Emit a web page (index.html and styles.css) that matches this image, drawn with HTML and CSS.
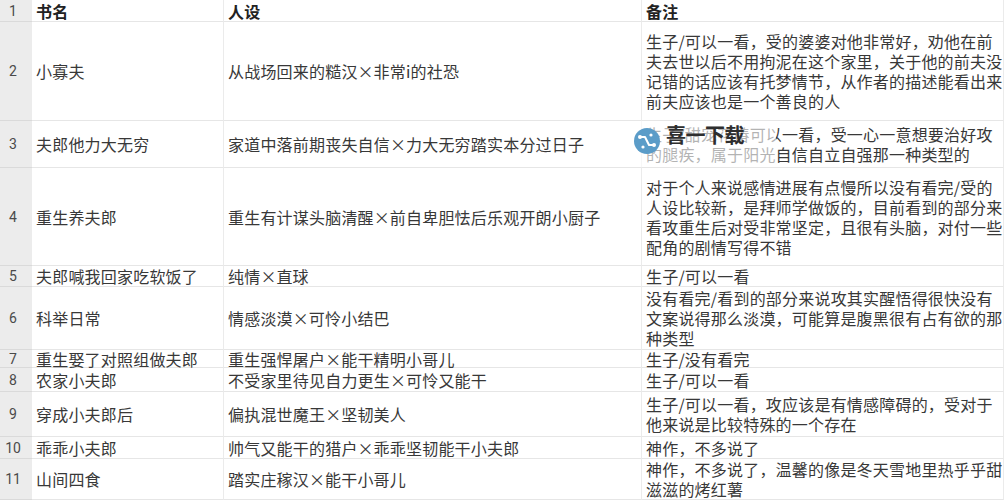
FILE: index.html
```html
<!DOCTYPE html>
<html lang="zh-CN">
<head>
<meta charset="utf-8">
<link rel="stylesheet" href="styles.css">
</head>
<body>
<div class="sheet">
  <div class="num">1</div><div class="cell head">书名</div><div class="cell head">人设</div><div class="cell head">备注</div>

  <div class="num">2</div><div class="cell">小寡夫</div><div class="cell">从战场回来的糙汉<span class="x">×</span>非常i的社恐</div>
  <div class="cell note"><div>生子/可以一看，受的婆婆对他非常好，劝他在前<br>夫去世以后不用拘泥在这个家里，关于他的前夫没<br>记错的话应该有托梦情节，从作者的描述能看出来<br>前夫应该也是一个善良的人</div></div>

  <div class="num">3</div><div class="cell">夫郎他力大无穷</div><div class="cell">家道中落前期丧失自信<span class="x">×</span>力大无穷踏实本分过日子</div>
  <div class="cell note"><div>生子/甜宠花椿可以一看，受一心一意想要治好攻<br>的腿疾，属于阳光自信自立自强那一种类型的</div></div>

  <div class="num">4</div><div class="cell">重生养夫郎</div><div class="cell">重生有计谋头脑清醒<span class="x">×</span>前自卑胆怯后乐观开朗小厨子</div>
  <div class="cell note"><div>对于个人来说感情进展有点慢所以没有看完/受的<br>人设比较新，是拜师学做饭的，目前看到的部分来<br>看攻重生后对受非常坚定，且很有头脑，对付一些<br>配角的剧情写得不错</div></div>

  <div class="num">5</div><div class="cell">夫郎喊我回家吃软饭了</div><div class="cell">纯情<span class="x">×</span>直球</div>
  <div class="cell note"><div>生子/可以一看</div></div>

  <div class="num">6</div><div class="cell">科举日常</div><div class="cell">情感淡漠<span class="x">×</span>可怜小结巴</div>
  <div class="cell note"><div>没有看完/看到的部分来说攻其实醒悟得很快没有<br>文案说得那么淡漠，可能算是腹黑很有占有欲的那<br>种类型</div></div>

  <div class="num">7</div><div class="cell">重生娶了对照组做夫郎</div><div class="cell">重生强悍屠户<span class="x">×</span>能干精明小哥儿</div>
  <div class="cell note"><div>生子/没有看完</div></div>

  <div class="num">8</div><div class="cell">农家小夫郎</div><div class="cell">不受家里待见自力更生<span class="x">×</span>可怜又能干</div>
  <div class="cell note"><div>生子/可以一看</div></div>

  <div class="num">9</div><div class="cell">穿成小夫郎后</div><div class="cell">偏执混世魔王<span class="x">×</span>坚韧美人</div>
  <div class="cell note"><div>生子/可以一看，攻应该是有情感障碍的，受对于<br>他来说是比较特殊的一个存在</div></div>

  <div class="num">10</div><div class="cell">乖乖小夫郎</div><div class="cell">帅气又能干的猎户<span class="x">×</span>乖乖坚韧能干小夫郎</div>
  <div class="cell note"><div>神作，不多说了</div></div>

  <div class="num">11</div><div class="cell">山间四食</div><div class="cell">踏实庄稼汉<span class="x">×</span>能干小哥儿</div>
  <div class="cell note"><div>神作，不多说了，温馨的像是冬天雪地里热乎乎甜<br>滋滋的烤红薯</div></div>
</div>

<div class="watermark">
  <svg class="wm-logo" width="26" height="26" viewBox="0 0 26 26">
    <circle cx="13" cy="13" r="13" fill="#5b9cc8"/>
    <path d="M6 9 L11 9 L15 17 L20 17" fill="none" stroke="#fff" stroke-width="2" stroke-linecap="round" stroke-linejoin="round"/>
    <circle cx="6" cy="9" r="2" fill="#fff"/>
    <circle cx="20" cy="17" r="2" fill="#fff"/>
    <circle cx="17" cy="7" r="1.6" fill="#fff"/>
    <circle cx="9" cy="19" r="1.6" fill="#fff"/>
  </svg>
  <span class="wm-text">喜一下载</span>
</div>
</body>
</html>
```
FILE: styles.css
```css
html, body {
  margin: 0;
  padding: 0;
  background: #fff;
  overflow: hidden;
}
body {
  width: 1004px;
  height: 500px;
  position: relative;
  font-family: "Noto Sans CJK SC", "Noto Sans", sans-serif;
}
.sheet {
  display: grid;
  grid-template-columns: 32px 192px 418px 362px;
  grid-template-rows: 22px 99px 47px 98px 21px 63px 18px 24px 45px 22px 41px;
  width: 1004px;
  height: 500px;
}
.num {
  background: #ececec;
  border-bottom: 1px solid #dadada;
  color: #4a4a4a;
  font-family: Roboto, "Liberation Sans", sans-serif;
  font-size: 14px;
  display: flex;
  align-items: center;
  justify-content: center;
  padding-right: 6px;
  box-sizing: border-box;
}
.cell {
  box-sizing: border-box;
  border-bottom: 1px solid #e6e6e6;
  border-right: 1px solid #ebebeb;
  display: flex;
  align-items: center;
  padding-left: 4px;
  font-size: 16px;
  letter-spacing: 0.2px;
  line-height: 20px;
  color: #383838;
  white-space: nowrap;
  overflow: visible;
}
.head {
  font-weight: 700;
  color: #222;
}
.note > div {
  line-height: 20px;
}
.x {
  display: inline-block;
  width: 16px;
  text-align: center;
}
.watermark {
  position: absolute;
  left: 628px;
  top: 121px;
  width: 148px;
  height: 46px;
  background: rgba(255, 255, 255, 0.62);
  display: flex;
  align-items: flex-start;
  gap: 6px;
  padding: 3px 0 0 6px;
  box-sizing: border-box;
}
.wm-logo {
  margin-top: 4px;
  flex: none;
}
.wm-text {
  font-size: 20px;
  font-weight: 700;
  color: #2e2e2e;
  line-height: 22px;
  letter-spacing: -0.5px;
}
```
